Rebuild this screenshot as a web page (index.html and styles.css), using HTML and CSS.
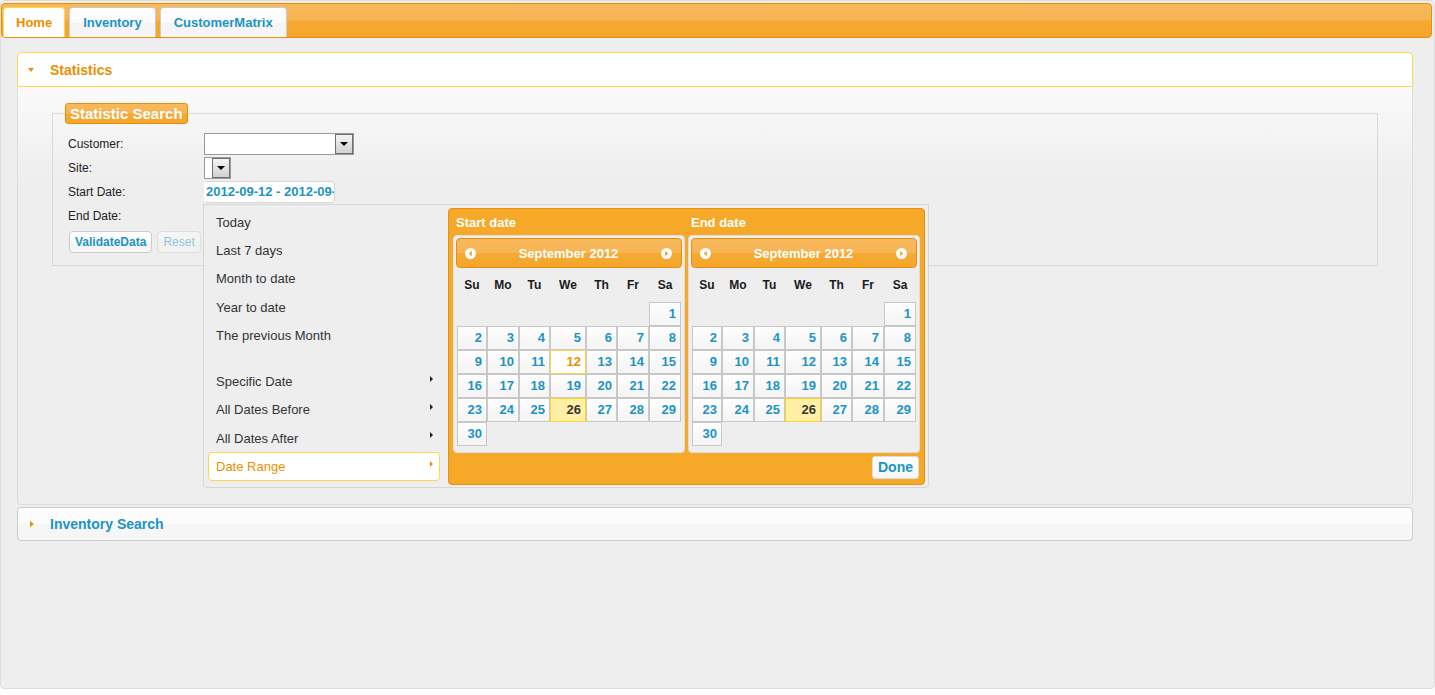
FILE: index.html
```html
<!DOCTYPE html>
<html>
<head>
<meta charset="utf-8">
<title>Statistics</title>
<link rel="stylesheet" href="styles.css">
</head>
<body>
<div class="tabs">
  <ul class="nav">
    <li class="tab active">Home</li>
    <li class="tab">Inventory</li>
    <li class="tab">CustomerMatrix</li>
  </ul>
  <div class="panel">
    <div class="acc-head active"><span class="tri-s"></span>Statistics</div>
    <div class="acc-content">
      <fieldset>
        <legend>Statistic Search</legend>
        <div class="form">
          <div class="row r1"><span class="lbl">Customer:</span><div class="sel wide"><div class="sbtn"><span class="dtri"></span></div></div></div>
          <div class="row r2"><span class="lbl">Site:</span><div class="sel narrow"><div class="sbtn"><span class="dtri"></span></div></div></div>
          <div class="row r3"><span class="lbl">Start Date:</span><div class="date-input"><span class="date-text">2012-09-12 - 2012-09-26</span></div></div>
          <div class="row r4"><span class="lbl">End Date:</span></div>
          <div class="btns"><span class="btn-ui">ValidateData</span><span class="btn-ui disabled">Reset</span></div>
        </div>
      </fieldset>
    </div>
    <div class="acc-head inv"><span class="tri-e"></span>Inventory Search</div>
  </div>

  <div class="drp">
    <div class="menu">
      <div class="mi">Today</div>
      <div class="mi">Last 7 days</div>
      <div class="mi">Month to date</div>
      <div class="mi">Year to date</div>
      <div class="mi">The previous Month</div>
      <div class="spacer"></div>
      <div class="mi">Specific Date<span class="arr"></span></div>
      <div class="mi">All Dates Before<span class="arr"></span></div>
      <div class="mi">All Dates After<span class="arr"></span></div>
      <div class="mi on">Date Range<span class="arr"></span></div>
    </div>
    <div class="cal-panel">
      <div class="cols">
        <div class="col">
          <div class="col-lbl">Start date</div>
          <div class="cal">
            <div class="cal-head">
              <svg width="11" height="11" viewBox="0 0 11 11"><circle cx="5.5" cy="5.5" r="5.5" fill="#fff"/><path d="M6.9 2.8 L3.6 5.5 L6.9 8.2 Z" fill="#f6a828"/></svg>
              <span>September 2012</span>
              <svg width="11" height="11" viewBox="0 0 11 11"><circle cx="5.5" cy="5.5" r="5.5" fill="#fff"/><path d="M4.1 2.8 L7.4 5.5 L4.1 8.2 Z" fill="#f6a828"/></svg>
            </div>
            <div class="dnames"><span>Su</span><span>Mo</span><span>Tu</span><span>We</span><span>Th</span><span>Fr</span><span>Sa</span></div>
            <div class="grid">
              <span class="e"></span><span class="e"></span><span class="e"></span><span class="e"></span><span class="e"></span><span class="e"></span><span class="d">1</span>
              <span class="d">2</span><span class="d">3</span><span class="d">4</span><span class="d">5</span><span class="d">6</span><span class="d">7</span><span class="d">8</span>
              <span class="d">9</span><span class="d">10</span><span class="d">11</span><span class="d act">12</span><span class="d">13</span><span class="d">14</span><span class="d">15</span>
              <span class="d">16</span><span class="d">17</span><span class="d">18</span><span class="d">19</span><span class="d">20</span><span class="d">21</span><span class="d">22</span>
              <span class="d">23</span><span class="d">24</span><span class="d">25</span><span class="d hl">26</span><span class="d">27</span><span class="d">28</span><span class="d">29</span>
              <span class="d">30</span>
            </div>
          </div>
        </div>
        <div class="col">
          <div class="col-lbl">End date</div>
          <div class="cal">
            <div class="cal-head">
              <svg width="11" height="11" viewBox="0 0 11 11"><circle cx="5.5" cy="5.5" r="5.5" fill="#fff"/><path d="M6.9 2.8 L3.6 5.5 L6.9 8.2 Z" fill="#f6a828"/></svg>
              <span>September 2012</span>
              <svg width="11" height="11" viewBox="0 0 11 11"><circle cx="5.5" cy="5.5" r="5.5" fill="#fff"/><path d="M4.1 2.8 L7.4 5.5 L4.1 8.2 Z" fill="#f6a828"/></svg>
            </div>
            <div class="dnames"><span>Su</span><span>Mo</span><span>Tu</span><span>We</span><span>Th</span><span>Fr</span><span>Sa</span></div>
            <div class="grid">
              <span class="e"></span><span class="e"></span><span class="e"></span><span class="e"></span><span class="e"></span><span class="e"></span><span class="d">1</span>
              <span class="d">2</span><span class="d">3</span><span class="d">4</span><span class="d">5</span><span class="d">6</span><span class="d">7</span><span class="d">8</span>
              <span class="d">9</span><span class="d">10</span><span class="d">11</span><span class="d">12</span><span class="d">13</span><span class="d">14</span><span class="d">15</span>
              <span class="d">16</span><span class="d">17</span><span class="d">18</span><span class="d">19</span><span class="d">20</span><span class="d">21</span><span class="d">22</span>
              <span class="d">23</span><span class="d">24</span><span class="d">25</span><span class="d hl">26</span><span class="d">27</span><span class="d">28</span><span class="d">29</span>
              <span class="d">30</span>
            </div>
          </div>
        </div>
      </div>
      <div class="foot"><span class="done">Done</span></div>
    </div>
  </div>
</div>
</body>
</html>
```

FILE: styles.css
```css
* { box-sizing: border-box; }
html, body { margin: 0; padding: 0; }
body {
  background: #fff;
  font-family: "Trebuchet MS", "Liberation Sans", Arial, sans-serif;
  width: 1435px;
  height: 695px;
  overflow: hidden;
}

.tabs {
  position: relative;
  width: 1435px;
  height: 689px;
  border: 1px solid #ddd;
  border-radius: 4px;
  background: #eee;
  padding: 2px 2px 0 0;
}

.nav {
  list-style: none;
  margin: 0;
  padding: 3px 0 0 1px;
  display: flex;
  gap: 4px;
  height: 35px;
  border: 1px solid #e78f08;
  border-radius: 4px;
  background: linear-gradient(#f8b95c 0%, #f7b352 48%, #f5a931 52%, #f5a62b 100%);
}
.tab {
  height: 30px;
  padding: 0 13px;
  border: 1px solid #ccc;
  border-bottom: 0;
  border-radius: 4px 4px 0 0;
  font-size: 13px;
  font-weight: bold;
  line-height: 29px;
  color: #1c94c4;
  background: linear-gradient(#ffffff 0%, #fbfbfb 50%, #f4f4f4 51%, #f6f6f6 100%);
}
.tab.active {
  background: #fff;
  border-color: #fbd850;
  color: #eb8f00;
  padding: 0 12px;
}

.panel {
  width: 1396px;
  margin: 14px 0 0 16px;
}

.acc-head {
  height: 35px;
  display: flex;
  align-items: center;
  padding-left: 10px;
  border: 1px solid #ccc;
  border-radius: 4px;
  font-size: 14px;
  font-weight: bold;
  color: #1c94c4;
  background: linear-gradient(#fdfdfd 0%, #fbfbfb 50%, #f6f6f6 51%, #f6f6f6 100%);
}
.acc-head.active {
  background: #fff;
  border-color: #fbd850;
  color: #eb8f00;
  border-radius: 4px 4px 0 0;
}
.acc-head.inv {
  margin-top: 2px;
  height: 34px;
}
.tri-s {
  width: 0; height: 0;
  border-top: 4px solid #ef8c08;
  border-left: 3px solid transparent;
  border-right: 3px solid transparent;
  margin-right: 16px;
}
.tri-e {
  width: 0; height: 0;
  border-left: 4px solid #ef8c08;
  border-top: 3px solid transparent;
  border-bottom: 3px solid transparent;
  margin-left: 2px;
  margin-right: 16px;
}

.acc-content {
  height: 418px;
  border: 1px solid #ddd;
  border-top: 0;
  border-radius: 0 0 4px 4px;
  background: linear-gradient(#fafafa 0px, #f5f5f5 40px, #f0f0f0 75px, #eeeeee 100px);
  padding: 16px 34px 0;
}

fieldset {
  margin: 0;
  padding: 0 15px 12px;
  border: 1px solid #d9d9d9;
  min-width: 0;
}
legend {
  margin-left: -3px;
  padding: 0 4px;
  height: 21px;
  line-height: 19px;
  border: 1px solid #e78f08;
  border-radius: 3px;
  color: #fff;
  font-weight: bold;
  font-size: 15px;
  background: linear-gradient(#f8b95c 0%, #f7b352 48%, #f5a931 52%, #f5a62b 100%);
}

.form { margin-top: 7px; }
.row {
  display: flex;
  align-items: center;
  font-size: 12px;
  color: #222;
  height: 24px;
}
.row.r1 { height: 25px; }
.lbl { width: 136px; }

.sel {
  height: 22px;
  background: #fff;
  border: 1px solid #9a9a9a;
  display: flex;
  justify-content: flex-end;
}
.sel.wide { width: 150px; }
.sel.narrow { width: 27px; }
.sbtn {
  width: 18px;
  height: 20px;
  border: 1px solid #6f6f6f;
  background: linear-gradient(#f4f4f4, #d2d2d2);
  display: flex;
  align-items: center;
  justify-content: center;
}
.dtri {
  width: 0; height: 0;
  border-top: 4px solid #000;
  border-left: 4px solid transparent;
  border-right: 4px solid transparent;
}

.date-input {
  width: 131px;
  height: 22px;
  border: 1px solid #d6d6d6;
  border-left-color: #fff;
  border-radius: 4px;
  background: #fff;
  color: #1c94c4;
  font-size: 13px;
  font-weight: bold;
  line-height: 20px;
  padding-left: 1px;
  white-space: nowrap;
  overflow: hidden;
}
.date-text { display: inline-block; }

.btns {
  display: flex;
  gap: 5px;
  margin-top: 3px;
  padding-left: 1px;
}
.btn-ui {
  height: 22px;
  padding: 0 5px;
  border: 1px solid #ccc;
  border-radius: 4px;
  background: linear-gradient(#ffffff 0%, #fbfbfb 50%, #f4f4f4 51%, #f6f6f6 100%);
  color: #1c94c4;
  font-weight: bold;
  font-size: 12px;
  line-height: 20px;
}
.btn-ui.disabled { opacity: 0.45; font-weight: normal; }

.drp {
  position: absolute;
  left: 202px;
  top: 203px;
  width: 726px;
  border: 1px solid #d6d6d6;
  border-radius: 0 0 4px 4px;
  background: #eee;
  padding: 3px 3px 2px 4px;
  display: flex;
  gap: 8px;
}
.menu {
  width: 232px;
  font-size: 13px;
  color: #333;
}
.mi {
  height: 28.3px;
  border: 1px solid transparent;
  border-radius: 4px;
  padding: 0 6px 0 7px;
  display: flex;
  align-items: center;
  justify-content: space-between;
}
.spacer { height: 18px; }
.arr {
  width: 0; height: 0;
  border-left: 3px solid #222;
  border-top: 3px solid transparent;
  border-bottom: 3px solid transparent;
  margin-top: -6px;
}
.mi.on {
  background: #fff;
  border-color: #fbd850;
  color: #eb8f00;
}
.mi.on .arr { border-left-color: #eb8f00; }

.cal-panel {
  width: 477px;
  border: 1px solid #e78f08;
  border-radius: 4px;
  background: #f6a828;
  padding: 0 4px 5px;
}
.cols { display: flex; gap: 3px; }
.col { width: 232px; }
.col-lbl {
  height: 26px;
  line-height: 27px;
  padding-left: 3px;
  color: #fff;
  font-weight: bold;
  font-size: 13px;
}
.cal {
  height: 218px;
  border: 1px solid #ddd;
  border-radius: 4px;
  background: #eee;
  padding: 2px;
}
.cal-head {
  height: 30px;
  border: 1px solid #e78f08;
  border-radius: 4px;
  background: linear-gradient(#f8ba5e 0%, #f7b452 48%, #f5aa33 52%, #f5a62b 100%);
  display: flex;
  align-items: center;
  justify-content: space-between;
  padding: 0 9px 0 8px;
  color: #fff;
  font-weight: bold;
  font-size: 13px;
}
.cal-head svg { display: block; }
.dnames, .grid {
  display: grid;
  grid-template-columns: 30px 32px 31px 36px 31px 32px 32px;
  margin-left: 1px;
}
.dnames {
  height: 34px;
  align-items: center;
  text-align: center;
  font-weight: bold;
  font-size: 12px;
  color: #1a1a1a;
}
.grid { grid-auto-rows: 24px; }
.d {
  border: 1px solid #c8c8c8;
  background: linear-gradient(#fefefe, #f4f4f4);
  color: #1c94c4;
  font-weight: bold;
  font-size: 13px;
  text-align: right;
  padding-right: 4px;
  line-height: 22px;
}
.d.act {
  background: #fff;
  border-color: #fbd850;
  color: #eb8f00;
}
.d.hl {
  background: #fff0a5;
  border-color: #fed22f;
  color: #363636;
}

.foot {
  display: flex;
  justify-content: flex-end;
  padding-top: 3px;
  padding-right: 1px;
}
.done {
  height: 23px;
  padding: 0 5px;
  border: 1px solid #ddd;
  border-radius: 3px;
  background: linear-gradient(#ffffff, #f6f6f6);
  color: #1c94c4;
  font-weight: bold;
  font-size: 14px;
  line-height: 21px;
}
```
